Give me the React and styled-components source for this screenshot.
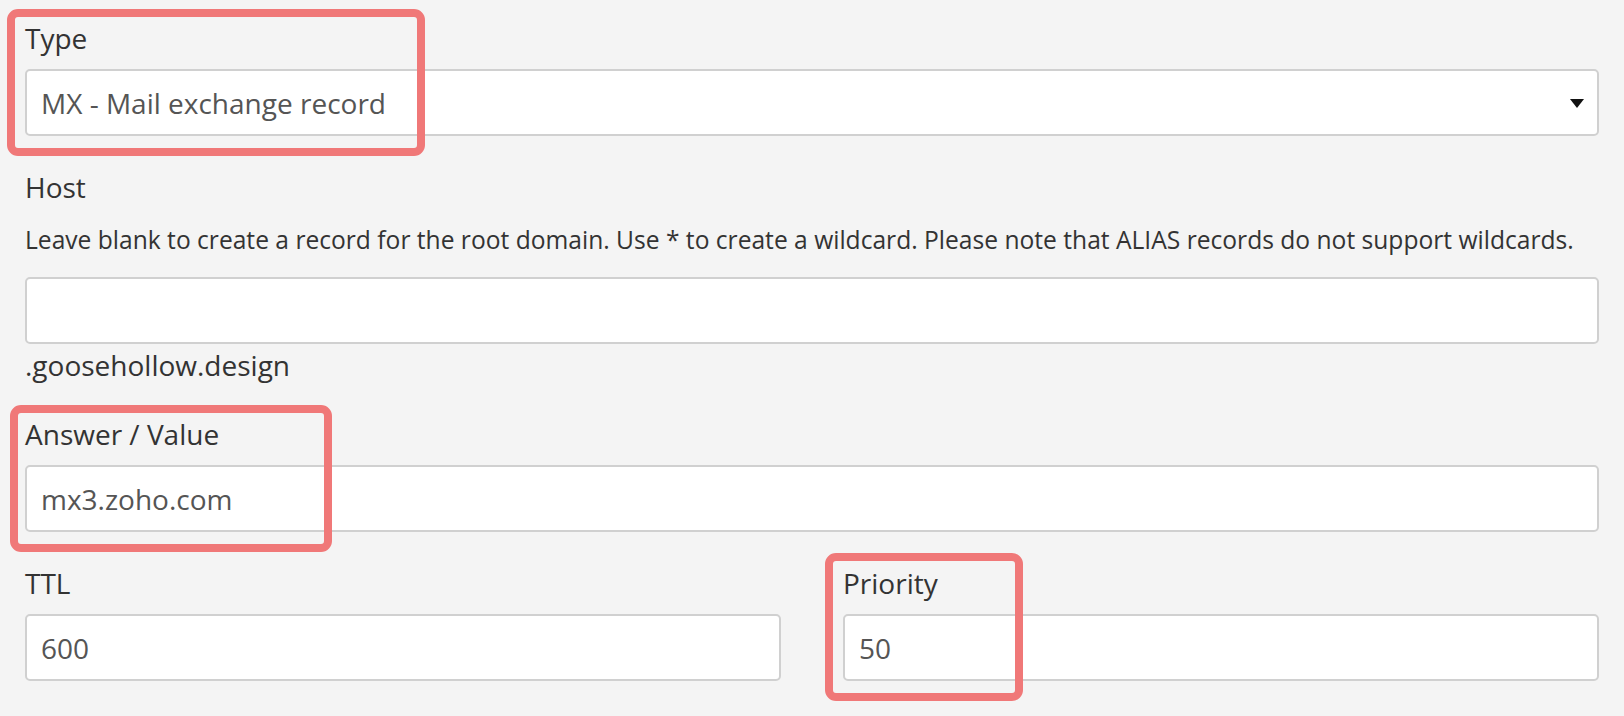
import styled, { createGlobalStyle } from 'styled-components';

const GlobalStyle = createGlobalStyle`
	html, body {
		margin: 0;
		padding: 0;
		background: #f4f4f4;
	}
	body {
		font-family: 'Open Sans', 'Noto Sans', sans-serif;
		color: #333;
	}
`;

const Page = styled.form`
	width: 1624px;
	height: 716px;
	box-sizing: border-box;
	padding: 17px 25px 0;
	background: #f4f4f4;
	overflow: hidden;
`;

const FormGroup = styled.div`
	position: relative;
	margin-bottom: 30px;
`;

const Label = styled.label`
	display: block;
	font-size: 28px;
	line-height: 42px;
	margin-bottom: 10px;
	color: #333;
`;

// margin-top collapses with the label's margin-bottom
const HelpText = styled.p`
	margin: 14px 0 19px;
	font-size: 24.6px;
	line-height: 36px;
	color: #333;
`;

const Suffix = styled.div`
	font-size: 28px;
	line-height: 42px;
	color: #333;
	margin-bottom: -3px;
`;

const fieldCss = `
	display: block;
	width: 100%;
	height: 67px;
	box-sizing: border-box;
	margin: 0;
	padding: 0 14px;
	background: #fff;
	border: 2px solid #d0d0d0;
	border-radius: 5px;
	font-family: 'Open Sans', 'Noto Sans', sans-serif;
	font-size: 28px;
	color: #555;
	outline: none;
`;

const Input = styled.input`
	${fieldCss}
`;

const SelectWrap = styled.div`
	position: relative;
`;

const Select = styled.select`
	${fieldCss}
	appearance: none;
	-webkit-appearance: none;
`;

const Caret = styled.svg`
	position: absolute;
	right: 15px;
	top: 30px;
	pointer-events: none;
`;

const Row = styled.div`
	display: grid;
	grid-template-columns: 1fr 1fr;
	column-gap: 62px;
`;

const Highlight = styled.span`
	position: absolute;
	left: ${(p) => p.$left}px;
	top: ${(p) => p.$top}px;
	width: ${(p) => p.$width}px;
	height: ${(p) => p.$height}px;
	box-sizing: border-box;
	border: 8px solid #f07878;
	border-radius: 11px;
	pointer-events: none;
`;

const App = () => {
	return (
		<>
			<GlobalStyle />
			<Page onSubmit={(e) => e.preventDefault()}>
				<FormGroup>
					<Label htmlFor="type">Type</Label>
					<SelectWrap>
						<Select id="type" defaultValue="MX">
							<option value="A">A - Address record</option>
							<option value="MX">MX - Mail exchange record</option>
							<option value="TXT">TXT - Text record</option>
						</Select>
						<Caret width="14" height="9" viewBox="0 0 14 9">
							<path d="M0 0 H14 L7 9 Z" fill="#111" />
						</Caret>
					</SelectWrap>
					<Highlight $left={-18} $top={-8} $width={418} $height={147} />
				</FormGroup>

				<FormGroup>
					<Label htmlFor="host">Host</Label>
					<HelpText>
						Leave blank to create a record for the root domain. Use * to create a wildcard. Please note
						that ALIAS records do not support wildcards.
					</HelpText>
					<Input id="host" defaultValue="" />
					<Suffix>.goosehollow.design</Suffix>
				</FormGroup>

				<FormGroup>
					<Label htmlFor="answer">Answer / Value</Label>
					<Input id="answer" defaultValue="mx3.zoho.com" />
					<Highlight $left={-15} $top={-8} $width={322} $height={147} />
				</FormGroup>

				<Row>
					<FormGroup>
						<Label htmlFor="ttl">TTL</Label>
						<Input id="ttl" defaultValue="600" />
					</FormGroup>
					<FormGroup>
						<Label htmlFor="priority">Priority</Label>
						<Input id="priority" defaultValue="50" />
						<Highlight $left={-18} $top={-9} $width={198} $height={148} />
					</FormGroup>
				</Row>
			</Page>
		</>
	);
};

export default App;
